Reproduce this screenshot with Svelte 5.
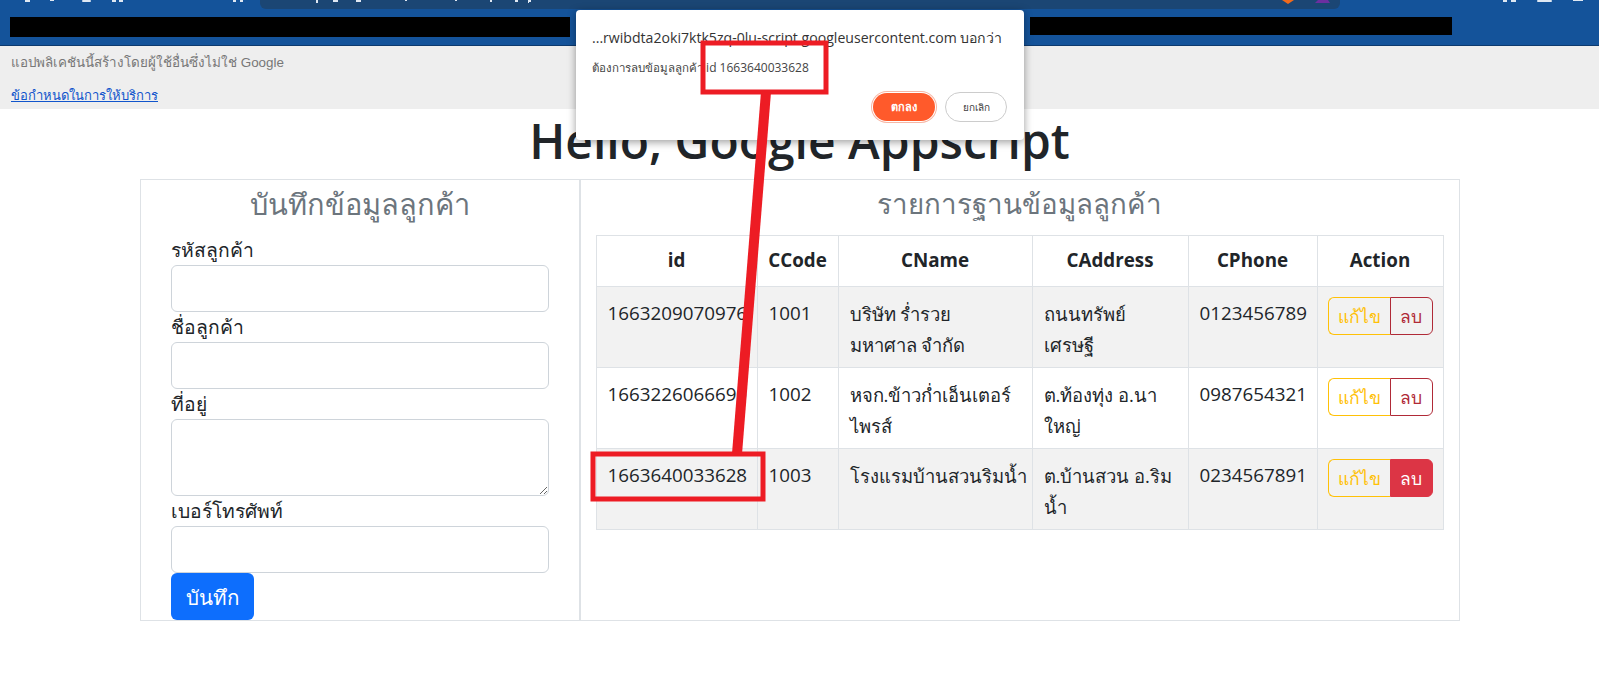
<script>
  const rows = [
    { id: '1663209070976', code: '1001', name: ['บริษัท ร่ำรวย', 'มหาศาล จำกัด'], addr: ['ถนนทรัพย์', 'เศรษฐี'], phone: '0123456789', hot: false },
    { id: '1663226066690', code: '1002', name: ['หจก.ข้าวก่ำเอ็นเตอร์', 'ไพรส์'], addr: ['ต.ท้องทุ่ง อ.นา', 'ใหญ่'], phone: '0987654321', hot: false },
    { id: '1663640033628', code: '1003', name: ['โรงแรมบ้านสวนริมน้ำ'], addr: ['ต.บ้านสวน อ.ริม', 'น้ำ'], phone: '0234567891', hot: true }
  ];
</script>

<div class="chrome">
  <div class="omnibox"></div>
  <div class="bookmarks"><div class="mask one"></div><div class="mask two"></div></div>
  <svg class="frags" viewBox="0 0 1599 10" width="1599" height="10" aria-hidden="true">
    <g fill="#dfe8f3">
      <rect x="25" y="0" width="5" height="2" /><rect x="50" y="0" width="4" height="1" />
      <rect x="82" y="0" width="9" height="2" rx="1" /><rect x="112" y="0" width="4" height="2" /><rect x="119" y="0" width="4" height="2" />
      <rect x="233" y="0" width="3" height="2" /><rect x="240" y="0" width="3" height="2" />
      <rect x="316" y="0" width="2" height="3" /><rect x="333" y="0" width="5" height="2" /><rect x="356" y="0" width="5" height="2" />
      <rect x="405" y="0" width="2" height="1" /><rect x="455" y="0" width="2" height="1" /><rect x="490" y="0" width="2" height="2" />
      <rect x="515" y="0" width="3" height="2" /><rect x="528" y="0" width="3" height="2" /><rect x="528" y="0" width="1" height="3" />
      <rect x="1503" y="0" width="4" height="2" /><rect x="1511" y="0" width="5" height="2" />
      <rect x="1537" y="0" width="15" height="2" rx="1" /><rect x="1573" y="0" width="10" height="1" />
    </g>
    <path d="M1282 0 H1294 L1288 4 Z" fill="#f26a1b" />
    <path d="M1315 3 L1318 0 H1328 L1330 3 Z" fill="#6b2fa0" />
  </svg>
</div>
<div class="notice">
  <p class="warn">แอปพลิเคชันนี้สร้างโดยผู้ใช้อื่นซึ่งไม่ใช่ Google</p>
  <a class="terms" href="#top">ข้อกำหนดในการให้บริการ</a>
</div>

<main>
  <h1>Hello, Google Appscript</h1>
  <div class="cols">
    <section class="card left">
      <h3>บันทึกข้อมูลลูกค้า</h3>
      <form>
        <label for="a">รหัสลูกค้า</label><input id="a" />
        <label for="b">ชื่อลูกค้า</label><input id="b" />
        <label for="c">ที่อยู่</label><textarea id="c"></textarea>
        <label for="d">เบอร์โทรศัพท์</label><input id="d" />
        <button type="button" class="save">บันทึก</button>
      </form>
    </section>
    <section class="card right">
      <h3>รายการฐานข้อมูลลูกค้า</h3>
      <table>
        <colgroup><col class="c1" /><col class="c2" /><col class="c3" /><col class="c4" /><col class="c5" /><col class="c6" /></colgroup>
        <thead><tr><th>id</th><th>CCode</th><th>CName</th><th>CAddress</th><th>CPhone</th><th>Action</th></tr></thead>
        <tbody>
          {#each rows as r}
            <tr>
              <td>{r.id}</td><td>{r.code}</td>
              <td class="thai">{#each r.name as line}<div>{line}</div>{/each}</td>
              <td class="thai">{#each r.addr as line}<div>{line}</div>{/each}</td>
              <td>{r.phone}</td>
              <td><div class="group"><button type="button" class="edit">แก้ไข</button><button type="button" class="del" class:hot={r.hot}>ลบ</button></div></td>
            </tr>
          {/each}
        </tbody>
      </table>
    </section>
  </div>
</main>

<div class="dialog">
  <div class="origin">...rwibdta2oki7ktk5zq-0lu-script.googleusercontent.com บอกว่า</div>
  <div class="msg"><span class="m-th">ต้องการลบข้อมูลลูกค้า</span> id 1663640033628</div>
  <div class="actions"><button type="button" class="ok">ตกลง</button><button type="button" class="cancel">ยกเลิก</button></div>
</div>

<svg class="markup" viewBox="0 0 1599 675" width="1599" height="675" aria-hidden="true">
  <rect x="703" y="43" width="123" height="49" fill="none" stroke="#ed1c24" stroke-width="5" />
  <rect x="593" y="454" width="170" height="45" fill="none" stroke="#ed1c24" stroke-width="5" />
  <path d="M766 92 L737 454" stroke="#ed1c24" stroke-width="10" fill="none" />
</svg>

<style>
  :global(body) { margin: 0; background: #fff; color: #212529; font-family: "Open Sans", "Noto Sans", "Liberation Sans", sans-serif; overflow: hidden; }
  .chrome { height: 46px; background: #14539a; border-bottom: 1px solid #0d3a6e; box-sizing: border-box; position: relative; }
  .frags { position: absolute; left: 0; top: 0; }
  .omnibox { height: 9px; margin: 0 259px 0 260px; background: #1b4674; border-radius: 0 0 6px 6px; }
  .bookmarks { display: flex; height: 20px; margin: 8px 0 0 10px; align-items: flex-start; }
  .mask { background: #000; }
  .one { width: 560px; height: 20px; }
  .two { width: 422px; height: 18px; margin-left: 460px; }
  .notice { height: 63px; background: #eee; padding: 8px 11px 0; box-sizing: border-box; font-family: "Liberation Sans", sans-serif; font-size: 13.4px; }
  .warn { margin: 0 0 15px; color: #777; line-height: 18px; }
  .terms { color: #15c; line-height: 18px; font-size: 13px; }
  main { width: 1320px; margin: 0 auto; }
  h1 { margin: -3px 0 3px; font-size: 48px; font-weight: 600; text-align: center; line-height: 70px; }
  .cols { display: grid; grid-template-columns: 440px 880px; }
  .card { border: 1px solid #dee2e6; box-sizing: border-box; height: 442px; }
  h3 { margin: 0; font-size: 29px; font-weight: 500; color: #6c757d; text-align: center; line-height: 47px; padding-bottom: 1px; }
  .right h3 { font-size: 27.7px; }
  form { display: flex; flex-direction: column; padding: 7px 30px 0; align-items: flex-start; }
  label { font-size: 19.3px; line-height: 30px; display: block; }
  input, textarea { width: 378px; height: 47px; box-sizing: border-box; border: 1px solid #ced4da; border-radius: 6px; background: #fff; display: block; margin: 0; }
  textarea { height: 77px; }
  .save { width: 83px; height: 47px; border: 0; background: #0d6efd; color: #fff; border-radius: 6px; font: inherit; font-size: 20.5px; line-height: 24px; font-weight: 500; padding: 0; }
  .right { padding: 0 15px; }
  table { border-collapse: collapse; table-layout: fixed; width: 847px; margin-top: 7px; font-size: 18.8px; }
  .c1 { width: 161px; } .c2 { width: 81px; } .c3 { width: 194px; } .c4 { width: 156px; } .c5 { width: 129px; } .c6 { width: 126px; }
  th, td { border: 1px solid #dee2e6; padding: 11px 11px 7px; vertical-align: top; line-height: 31px; }
  td { height: 81px; box-sizing: border-box; white-space: nowrap; }
  td.thai { font-size: 18.4px; }
  th { height: 51px; box-sizing: border-box; padding: 9px 6px; font-weight: 700; text-align: center; color: #212529; }
  tbody tr:nth-child(odd) td { background: #f2f2f2; }
  td:last-child { padding: 10px; }
  .group { display: flex; height: 38px; }
  .group button { font: inherit; font-size: 17.5px; line-height: 24px; background: transparent; padding: 0; height: 38px; box-sizing: border-box; }
  .edit { width: 62px; border: 1px solid #ffc107; color: #ffc107; border-radius: 6px 0 0 6px; border-right: 0; }
  .del { width: 43px; border: 1px solid #b02a37; color: #b02a37; border-radius: 0 6px 6px 0; }
  .group .hot { background: #dc3545; border-color: #dc3545; color: #fff; }
  .dialog { position: absolute; left: 576px; top: 10px; width: 448px; height: 130px; background: #fff; border-radius: 4px; box-shadow: 0 2px 8px rgba(0,0,0,.4); box-sizing: border-box; padding: 18px 16px 0; color: #333; }
  .origin { font-size: 14.1px; line-height: 20px; white-space: nowrap; }
  .msg { font-size: 12px; line-height: 18px; margin-top: 11px; color: #444; white-space: nowrap; }
  .m-th { font-size: 11.5px; }
  .actions { display: flex; justify-content: flex-end; gap: 10px; margin-top: 15px; padding-right: 1px; align-items: center; }
  .ok, .cancel { font: inherit; font-size: 10px; line-height: 14px; border-radius: 16px; height: 30px; width: 62px; padding: 0; }
  .ok { background: #ff5a2b; color: #fff; border: 0; height: 28px; font-size: 11px; font-weight: 700; box-shadow: 0 0 0 1px #fff, 0 0 0 2px #f7b7a5; }
  .cancel { background: #fff; color: #444; border: 1px solid #ccc; }
  .markup { position: absolute; left: 0; top: 0; pointer-events: none; }
</style>
